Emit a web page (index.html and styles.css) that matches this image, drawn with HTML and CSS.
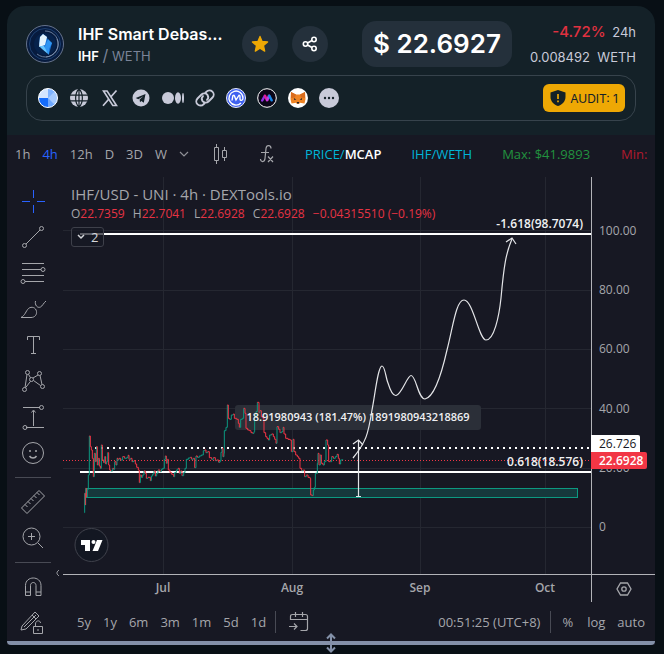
FILE: index.html
```html
<!DOCTYPE html>
<html lang="en">
<head>
<meta charset="utf-8">
<title>IHF / WETH</title>
<link rel="stylesheet" href="styles.css">
</head>
<body>
<main class="panel">
  <header class="head">
    <div class="summary">
      <svg class="avatar" viewBox="0 0 38 38" aria-hidden="true">
        <circle cx="19" cy="19" r="18.5" fill="#071b3e" stroke="#66738c"/>
        <circle cx="19" cy="19" r="15.5" fill="none" stroke="#1c3f70"/>
        <path d="M19 6a13 13 0 1 1-8 23M31 14a13 13 0 0 1-11 18" fill="none" stroke="#8295b4" stroke-width=".8"/>
        <circle cx="19" cy="19" r="11" fill="#06224c"/>
        <path d="M17 9l4 3 1 4 4 2-3 11-3-3-7-7 1-7z" fill="#1673d8"/>
        <path d="M17 9l4 3-2 8-6 2 1-10z" fill="#e4f4fd"/>
        <path d="M20 19l2-5 4 4-3 6 0 6-5-6z" fill="#2f95f2"/>
        <path d="M13 21l5 0 4 8-6-5z" fill="#64c5ff"/>
      </svg>
      <div class="names">
        <h1>IHF Smart Debas…</h1>
        <p><b>IHF</b> <i>/</i> WETH</p>
      </div>
      <div class="actions">
        <button class="round" aria-label="Favourite"><svg width="18" height="18" viewBox="0 0 18 18"><path d="M9 1.400l2.100 5 5.500.5-4.100 3.700 1.200 5.500L9 13.200l-4.700 2.900 1.200-5.500L1.400 6.900l5.500-.5z" fill="#eea804" stroke="#eea804" stroke-width="1.300" stroke-linejoin="round"/></svg></button>
        <button class="round" aria-label="Share"><svg width="16" height="16" viewBox="0 0 16 16" fill="none" stroke="#fff" stroke-width="1.600"><circle cx="3.500" cy="8" r="2.200"/><circle cx="12" cy="3.500" r="2.200"/><circle cx="12" cy="12.500" r="2.200"/><path d="M5.500 7L10 4.500M5.500 9l4.500 2.500"/></svg></button>
      </div>
      <div class="price">$ 22.6927</div>
      <div class="change">
        <p><strong>-4.72%</strong> 24h</p>
        <p>0.008492 &nbsp;WETH</p>
      </div>
    </div>
    <div class="links">
      <nav class="socials">
        <a href="#" aria-label="Explorer"><svg viewBox="0 0 20 20"><circle cx="10" cy="10" r="9.500" fill="#6da8ff"/><path d="M10 10V.5a9.500 9.500 0 0 0-9.500 9.500z" fill="#d3e5ff"/><path d="M10 10V.5A9.500 9.500 0 0 1 16.700 3.300z" fill="#7fb3ff"/><path d="M10 10L16.700 3.300A9.500 9.500 0 0 1 16.700 16.700z" fill="#a5caff"/><path d="M10 10H.5A9.500 9.500 0 0 0 10 19.500z" fill="#146cfb"/><circle cx="10" cy="10" r="9.500" fill="none" stroke="#fff"/></svg></a>
        <a href="#" aria-label="Website"><svg viewBox="0 0 20 20"><circle cx="10" cy="10" r="9" fill="#c8cad9"/><path d="M1 7.200h18M1 12.800h18M10 1v18M10 1C5.500 5 5.500 15 10 19M10 1c4.500 4 4.500 14 0 18" fill="none" stroke="#142128" stroke-width="1.200"/></svg></a>
        <a href="#" aria-label="X"><svg viewBox="0 0 20 20" fill="none" stroke="#c8cad9"><path d="M3.500 3h3.600l9.400 14.500h-3.700z" stroke-width="1.600"/><path d="M16.500 2.500L11 8.700M8.700 11.300l-5.700 6.400" stroke-width="1.700"/></svg></a>
        <a href="#" aria-label="Telegram"><svg viewBox="0 0 20 20"><circle cx="10" cy="10" r="8.500" fill="#c8cad9"/><path d="M4.700 10.100l9.800-4-1.700 8.700-2.500-1.900-1.300 1.300-.4-2.600 3.700-3.400-5 3z" fill="#142128"/></svg></a>
        <a href="#" aria-label="Medium"><svg class="wide" viewBox="0 0 22 20" fill="#c8cad9"><circle cx="6" cy="10" r="6"/><ellipse cx="16" cy="10" rx="3" ry="5.700"/><ellipse cx="21" cy="10" rx="1" ry="5"/></svg></a>
        <a href="#" aria-label="Contract"><svg viewBox="0 0 20 20" fill="none" stroke="#c8cad9" stroke-width="1.900" stroke-linecap="round"><path d="M9.500 15.500l-1 .8a4 4 0 0 1-6-5.800l4-4a4 4 0 0 1 6 .4 4 4 0 0 1-.5 5"/><path d="M10.500 4.500l1-.8a4 4 0 0 1 6 5.800l-4 4a4 4 0 0 1-6-.4 4 4 0 0 1 .5-5"/></svg></a>
        <a href="#" aria-label="CoinMarketCap"><svg viewBox="0 0 20 20"><circle cx="10" cy="10" r="9.500" fill="#3f61f0" stroke="#e8ebfb"/><path d="M15 15a7 7 0 1 1 2-5c0 3-3 3-3 1V8.500c0-1.500-1-1.500-1.500-.5L10 12 8.500 8C8 7 7 7.200 6.800 8L6 12.500" fill="none" stroke="#fff" stroke-width="1.400"/></svg></a>
        <a href="#" aria-label="Market"><svg viewBox="0 0 20 20"><circle cx="10" cy="10" r="9.300" fill="#0a0618" stroke="#fff"/><g fill="none" stroke-width="2.500" stroke-linecap="round"><path d="M5.200 12.500l2.500-4.500" stroke="#8d30e2"/><path d="M8 7.700l2 4.500" stroke="#e21d9b"/><path d="M10.300 12l1.700-4.300" stroke="#c63ae6"/><path d="M12.300 7.800l2.400 4.500" stroke="#1687e8"/></g></svg></a>
        <a href="#" aria-label="MetaMask"><svg viewBox="0 0 20 20"><circle cx="10" cy="10" r="10" fill="#fff"/><path d="M3 4l5 2.500h4L17 4l.5 7-1 4.500-4.500-.8-1 1.300H9l-1-1.300-4.500.8-1-4.500z" fill="#ef8424"/><path d="M3 4l5 2.500-1 3-4 .5zM17 4l-5 2.500 1 3 4 .5z" fill="#d96b1c"/><path d="M5.800 10l2.500 1.500-2 .5zM14.200 10l-2.500 1.500 2 .5zM8.800 14h2.400l-.3 1.500H9.100z" fill="#23242d"/></svg></a>
        <a href="#" aria-label="More"><svg viewBox="0 0 20 20"><circle cx="10" cy="10" r="10" fill="#c8cad9"/><g fill="#142128"><circle cx="6" cy="10" r="1.200"/><circle cx="10" cy="10" r="1.200"/><circle cx="14" cy="10" r="1.200"/></g></svg></a>
      </nav>
      <button class="audit"><svg width="16" height="16" viewBox="0 0 16 16"><path d="M8 0l7.500 2.500V7c0 4.500-3.500 7.700-7.500 9C4 14.700.5 11.500.5 7V2.500z" fill="#142128"/><path d="M8 4v5M8 10.500v1.800" stroke="#eea804" stroke-width="1.700"/></svg>AUDIT: 1</button>
    </div>
  </header>

  <section class="chart">
    <div class="topbar">
      <div class="intervals">
        <button>1h</button><button class="on">4h</button><button>12h</button><button>D</button><button>3D</button><button>W</button>
        <button aria-label="More intervals"><svg width="10" height="6" viewBox="0 0 10 6" fill="none" stroke="#8f9097" stroke-width="1.200"><path d="M1 1l4 4 4-4"/></svg></button>
      </div>
      <button class="tool-button" aria-label="Candles"><svg width="16" height="22" viewBox="0 0 16 22" fill="none" stroke="#a5a6ab"><path d="M1.500 4.500h4v13h-4zM3.500 1v3M3.500 18v3M9.500 7.500h4v7h-4zM11.500 4v3M11.500 15v3"/></svg></button>
      <button class="tool-button" aria-label="Indicators"><svg width="16" height="20" viewBox="0 0 16 20" fill="none" stroke="#a5a6ab" stroke-width="1.200"><path d="M12 4.500C12 1 7.500.5 7 4.500l-1 10c-.3 4-4.500 4-4.500.5M2 8.500h8M9 12.500l5 5.500M14 12.500L9 18"/></svg></button>
      <button class="cyan">PRICE/<b>MCAP</b></button>
      <button class="cyan">IHF/WETH</button>
      <span class="max">Max: $41.9893</span>
      <span class="min">Min:</span>
    </div>
    <div class="body">
      <div class="tools">
        <button aria-label="Crosshair"><svg viewBox="0 0 28 28"><path d="M14.500 3v8M14.500 18v8M3 14.500h8M18 14.500h8"/></svg></button>
        <button aria-label="Trend line"><svg viewBox="0 0 28 28"><circle cx="5.500" cy="22.500" r="2"/><circle cx="22.500" cy="5.500" r="2"/><path d="M7 21L21 7"/></svg></button>
        <button aria-label="Fibonacci"><svg viewBox="0 0 28 28"><path d="M3 4.500h22M3 10.500h19M3 16.500h22M6 22.500h19"/><circle cx="24" cy="10.500" r="2"/><circle cx="4" cy="22.500" r="2"/></svg></button>
        <button aria-label="Brush"><svg viewBox="0 0 28 28"><path d="M2 22.500h10c4 0 6-3 5.500-6-.5-4-5-5.500-8-3-3 3-3 6.500-7.500 9M16.500 6c-1 4 2 7.500 5 6 2-1 3-4 5.500-6"/></svg></button>
        <button aria-label="Text"><svg viewBox="0 0 28 28"><path d="M8.500 9V5.500h12V9M14.500 5.500v17M12 22.500h5"/></svg></button>
        <button aria-label="Pattern"><svg viewBox="0 0 28 28"><circle cx="8.500" cy="5.500" r="2"/><circle cx="20.500" cy="6.500" r="2"/><circle cx="12.500" cy="12.500" r="2"/><circle cx="5.500" cy="22.500" r="2"/><circle cx="23.500" cy="19.500" r="2"/><path d="M8 7.500l-2 13M9.500 7.300l2 3.500M14 11l5-3M21 8.500l2 9M14.500 13.500l7 5M11.500 14.300l-5 6.500"/></svg></button>
        <button aria-label="Measure"><svg viewBox="0 0 28 28"><path d="M4 4.500h17M7 24.500h18M14.500 23V8M12.500 9.500l2-2.500 2 2.500"/><circle cx="22.500" cy="4.500" r="2"/><circle cx="6" cy="24.500" r="2"/></svg></button>
        <button aria-label="Icons"><svg viewBox="0 0 28 28"><circle cx="14" cy="14" r="10.500"/><path d="M10.500 17c1.500 2.500 5.500 2.500 7 0M10 12h2M16 12h2" stroke-width="1.500"/></svg></button>
        <hr>
        <button aria-label="Ruler"><svg viewBox="0 0 28 28"><path d="M2.500 20L20 2.500l5.500 5.500L8 25.500zM6 16.500l2.500 2.500M9 13.500l2.500 2.500M12 10.500l2.500 2.500M15 7.500l2.500 2.500M18 4.500l2.500 2.500"/></svg></button>
        <button aria-label="Zoom in"><svg viewBox="0 0 28 28"><circle cx="12.500" cy="12.500" r="8.500"/><path d="M19 19l5 5M9 12.500h7M12.500 9v7"/></svg></button>
        <hr>
        <button aria-label="Magnet"><svg viewBox="0 0 28 28"><path d="M6.500 22.500v-10c0-10 15.500-10 15.500 0v10h-5v-10c0-4-5.500-4-5.500 0v10zM6.500 19h5M17 19h5"/></svg></button>
        <button aria-label="Lock drawings"><svg viewBox="0 0 28 28"><path d="M3 17L16 3l4 4L7 20l-5 1zM13 6l4 4M5 18L17 6M14.500 17.500h9v7h-9zM16.500 17v-2c0-4 5-4 5-1M19 20v2"/></svg></button>
      </div>
      <div class="stage">
        <div class="plot">
          <svg class="canvas" viewBox="63 177 592 425" role="img" aria-label="Price chart">
            <path class="grid" d="M63 230.500h528M63 290.500h528M63 349.500h528M63 408.500h528M63 468.500h528M63 527.500h528M163.500 177v397M292.500 177v397M420.500 177v397M545.500 177v397"/>
            <rect x="235" y="405" width="246" height="25" rx="3" fill="#2b2f38"/>
            <rect x="86.500" y="488.500" width="491" height="9" fill="#16383c" stroke="#0c9981"/>
            <path d="M80 234h511M80 472h511" stroke="#fff" stroke-width="2"/>
            <path d="M95 448h496" stroke="#fff" stroke-width="2" stroke-dasharray="2 4"/>
            <path d="M63 460.500h528" stroke="#f23645" stroke-dasharray="1 2"/>
            <g transform="translate(60 390) scale(.33333)" fill="none" stroke-width="3">
              <path id="up" stroke="#0c9981"/>
              <path id="down" stroke="#f23645"/>
            </g>
            <g fill="none" stroke="#e4e5e8" stroke-width="1.200">
              <path d="M353 458C366 442 368 435 372 410C375 395 378 366 382 366C385 366 386 379 388 383Q392 396 396 395.500C402 394 407 376 411 375.500C416 375 418 399 425 399C435 397 442 372 447 350C453 327 456 300 464 300C473 300 479 340 486 340C494 340 499 317 501 298C504 265 506 253 512 239"/>
              <path d="M506 242l6-4 4 6M358.500 440v57M353 444l5.500-4 4.500 5M356 496.500h5"/>
            </g>
            <g class="mark">
              <text x="583" y="228" text-anchor="end">-1.618(98.7074)</text>
              <text x="583" y="466" text-anchor="end">0.618(18.576)</text>
              <text class="measure" x="358" y="421" text-anchor="middle">18.91980943 (181.47%) 1891980943218869</text>
            </g>
            <g class="axis">
              <text x="599" y="235">100.00</text><text x="599" y="294">80.00</text><text x="599" y="353">60.00</text><text x="599" y="413">40.00</text><text x="599" y="472">20.00</text><text x="599" y="531">0</text>
            </g>
            <g class="axis dates" text-anchor="middle">
              <text x="163" y="592">Jul</text><text x="292" y="592">Aug</text><text x="420" y="592">Sep</text><text x="545" y="592">Oct</text>
            </g>
            <path d="M591.500 177v425M63 574.500h592" stroke="#b2b3b8"/>
            <path d="M591 435h47a2 2 0 0 1 2 2v15h-49z" fill="#fff"/>
            <path d="M591 452h54a2 2 0 0 1 2 2v13a2 2 0 0 1-2 2h-54z" fill="#f23645"/>
            <text class="tag dark" x="599" y="448">26.726</text>
            <text class="tag" x="599" y="465">22.6928</text>
            <circle cx="91.500" cy="545" r="16.500" fill="#131722" stroke="#40424c"/>
            <path d="M81 540h9v11h-5v-6h-4zM97 540h5.500l-4.500 11h-5.500z" fill="#fff"/><circle cx="93.500" cy="542" r="2" fill="#fff"/>
            <path d="M620.500 583h7l3.500 6-3.500 6h-7l-3.500-6z" fill="none" stroke="#a5a6ab" stroke-width="1.300"/>
            <circle cx="624" cy="589" r="2.200" fill="none" stroke="#a5a6ab" stroke-width="1.300"/>
          </svg>
          <div class="legend">
            <h2>IHF/USD - UNI · 4h · DEXTools.io</h2>
            <p>O<em>22.7359</em> H<em>22.7041</em> L<em>22.6928</em> C<em>22.6928</em> <em>−0.04315510 (−0.19%)</em></p>
            <button><svg width="8" height="6" viewBox="0 0 8 6" fill="none" stroke="#d5d6da" stroke-width="1.500"><path d="M1 1l3 3 3-3"/></svg>2</button>
          </div>
          <svg class="fold" width="4" height="8" viewBox="0 0 4 8" fill="none" stroke="#8f9097"><path d="M3 1L1 3v2l2 2"/></svg>
        </div>
        <div class="ranges">
          <div class="spans"><button>5y</button><button>1y</button><button>6m</button><button>3m</button><button>1m</button><button>5d</button><button>1d</button></div>
          <span class="rule"></span>
          <button aria-label="Go to date"><svg width="20" height="20" viewBox="0 0 20 20" fill="none" stroke="#a5a6ab" stroke-width="1.200"><path d="M1.500 8V4.500q0-2 2-2h13q2 0 2 2v12q0 2-2 2h-5M1.500 7.500h17M6.500 0v5M13.500 0v5M0 14.500h8M5 11.500l3 3-3 3"/></svg></button>
          <div class="scale"><span>00:51:25 (UTC+8)</span><span class="rule"></span><button class="percent">%</button><button>log</button><button>auto</button></div>
        </div>
      </div>
    </div>
    <div class="resize"><svg width="12" height="20" viewBox="0 0 12 20" fill="none" stroke="#8390a8" stroke-width="2"><path d="M6 2v16M2 5.500L6 1.500l4 4M2 14.500l4 4 4-4"/></svg></div>
  </section>
</main>
<script src="chart.js"></script>
</body>
</html>
```
FILE: styles.css
```css
* { box-sizing: border-box; margin: 0; }
body {
  min-height: 100vh;
  padding: 6px 9px 9px 7px;
  background: #080f15;
  color: #fff;
  font-family: Inter, "Liberation Sans", sans-serif;
}
button { padding: 0; border: 0; background: none; color: inherit; font: inherit; }
svg { display: block; }

.head {
  display: flex;
  flex-direction: column;
  gap: 8px;
  padding: 15px 19px 14px;
  border-radius: 18px 18px 0 0;
  background: #142128;
}
.summary { display: flex; align-items: center; height: 46px; }
.avatar { width: 38px; height: 38px; margin-right: 14px; }
.names { width: 164px; white-space: nowrap; }
.names h1 { font-size: 16px; line-height: 22px; font-weight: 600; }
.names p { font-size: 13px; line-height: 20px; color: #7b8499; }
.names b { color: #fff; font-weight: 600; }
.names i { font-size: 16px; font-style: normal; }
.actions { display: flex; gap: 14px; }
.round {
  display: grid;
  place-items: center;
  width: 36px;
  height: 36px;
  border-radius: 50%;
  background: #24303b;
}
.price {
  margin-left: 34px;
  padding: 0 11px;
  border-radius: 14px;
  background: #24303b;
  font-size: 26px;
  line-height: 46px;
  font-weight: 600;
  white-space: nowrap;
}
.change {
  flex: 1;
  color: #c8cad9;
  font-size: 13px;
  line-height: 25px;
  text-align: right;
  white-space: nowrap;
}
.change strong { margin-right: 3px; color: #e03140; font-size: 15px; font-weight: 500; }
.links {
  display: flex;
  align-items: center;
  justify-content: space-between;
  height: 46px;
  padding: 0 10px 0 11px;
  border: 1px solid #37434c;
  border-radius: 16px;
}
.socials { display: flex; gap: 11px; }
.socials svg { width: 20px; height: 20px; }
.socials .wide { width: 22px; }
.audit {
  display: flex;
  align-items: center;
  gap: 4px;
  height: 28px;
  padding: 0 7px;
  border-radius: 6px;
  background: #eea804;
  color: #142128;
  font-size: 12px;
}

.chart {
  background: #171823;
  color: #a5a6ab;
  font-family: "Open Sans", "Noto Sans", sans-serif;
  font-size: 13px;
}
.topbar {
  display: flex;
  align-items: center;
  height: 42px;
  padding: 0 0 4px 8px;
  overflow: hidden;
  white-space: nowrap;
}
.intervals { display: flex; align-items: center; gap: 12px; margin-right: 24px; }
.on { color: #2962ff; }
.tool-button { margin-right: 30px; }
.cyan { margin-right: 30px; color: #00b5d8; }
.cyan b { color: #fff; font-weight: 600; }
.max { margin-right: 31px; color: #22923f; }
.min { color: #b01a2e; }

.body { display: flex; }
.tools { flex: none; width: 52px; padding: 6px 0 0; }
.tools button { display: grid; place-items: center; width: 52px; height: 36px; }
.tools svg {
  width: 28px;
  height: 28px;
  fill: none;
  stroke: #a5a6ab;
}
.tools button:first-child svg { stroke: #2962ff; }
.tools hr { width: 36px; margin: 6px 8px; border: 0; border-top: 1px solid #484a54; }
.stage { flex: 1; min-width: 0; padding-left: 4px; }
.plot { position: relative; }
.canvas { width: 100%; height: auto; }
.grid { stroke: #252731; }
.mark { fill: #eff0f2; font-size: 12px; font-weight: 600; }
.measure { font-size: 11px; }
.axis { fill: #a5a6ab; font-size: 12px; }
.dates { font-weight: 600; }
.tag { fill: #fff; font-size: 12px; font-weight: 600; }
.dark { fill: #171823; font-weight: 400; }
.legend { position: absolute; top: 6px; left: 8px; white-space: nowrap; }
.legend h2 { font-size: 15px; line-height: 22px; font-weight: 400; }
.legend p { font-size: 12px; line-height: 18px; }
.legend em { margin-right: 5px; color: #e63343; font-style: normal; }
.legend button {
  display: flex;
  align-items: center;
  gap: 6px;
  height: 20px;
  margin-top: 4px;
  padding: 0 5px;
  border: 1px solid #3e404a;
  border-radius: 3px;
  background: rgb(23 24 35 / 70%);
  color: #d5d6da;
}
.fold { position: absolute; bottom: 25px; left: -7px; }
.ranges { display: flex; align-items: center; height: 39px; padding: 0 10px 0 14px; white-space: nowrap; }
.spans { display: flex; gap: 12px; margin-right: 9px; }
.rule { width: 1px; height: 22px; margin-right: 13px; background: #484a54; }
.scale { display: flex; align-items: center; margin-left: auto; }
.scale span:first-child { margin-right: 10px; }
.scale .rule { margin-right: 11px; }
.percent { margin-right: 14px; }
.percent + button { margin-right: 12px; }
.resize { position: relative; height: 4px; border-radius: 0 0 4px 4px; background: #8390a8; }
.resize svg { position: absolute; top: -8px; left: 50%; transform: translateX(-50%); }
```
FILE: chart.js
```js
// Time and level of each step of the price line.
const steps = [
  73,368, 74,310, 76,345, 77,295, 79,322, 82,298, 85,255, 88,138, 91,170, 94,180, 97,205, 100,260,
  103,190, 106,215, 109,170, 112,225, 115,205, 118,228, 121,235, 124,165, 127,210, 131,218, 134,200,
  137,222, 140,215, 143,188, 146,225, 149,240, 152,243, 158,235, 161,238, 164,215, 168,225, 171,205,
  174,210, 177,205, 182,210, 188,200, 194,205, 200,203, 204,196, 207,208, 212,205, 216,215, 222,212,
  226,222, 230,232, 235,240, 238,278, 241,255, 244,262, 248,255, 252,243, 256,250, 259,265, 264,262,
  271,272, 274,258, 278,252, 282,243, 286,258, 290,250, 294,240, 300,245, 304,238, 308,235, 313,208,
  316,198, 319,220, 322,208, 325,240, 330,248, 335,253, 341,260, 344,248, 349,240, 354,235, 358,250,
  362,243, 366,257, 371,248, 375,235, 379,208, 385,204, 391,202, 395,208, 400,205, 404,233, 408,198,
  412,202, 418,198, 424,195, 430,182, 434,180, 438,188, 443,185, 448,203, 455,208, 460,203, 466,212,
  470,210, 476,217, 480,213, 483,187, 486,175, 489,200, 492,190, 493,122, 498,112, 502,45, 505,85,
  509,88, 514,75, 520,72, 523,85, 530,88, 535,100, 538,112, 542,88, 547,85, 551,55, 555,70, 558,115,
  563,120, 568,122, 573,128, 578,130, 582,125, 584,80, 588,65, 592,37, 597,68, 600,62, 604,80,
  609,85, 612,128, 617,140, 621,145, 625,150, 629,135, 635,132, 640,140, 644,148, 648,160, 651,110,
  656,118, 660,128, 665,125, 669,112, 672,132, 677,145, 684,148, 690,150, 694,185, 699,148, 702,185,
  707,195, 712,200, 716,205, 720,235, 725,242, 730,240, 734,260, 739,255, 744,262, 750,265, 752,315,
  757,317, 760,300, 763,292, 766,250, 772,220, 774,190, 777,225, 781,195, 784,220, 789,225, 793,215,
  798,150, 803,165, 806,215, 811,215, 815,200, 820,205, 826,200, 831,193, 835,205, 838,222, 842,210,
  848,208
];
const lines = { up: "", down: "" };
for (let i = 2; i < steps.length; i += 2) {
  const [x0, y0, x, y] = steps.slice(i - 2, i + 2);
  lines[y < y0 ? "up" : "down"] += `M${x0} ${y0}H${x}V${y}`;
}
for (const id in lines) document.getElementById(id).setAttribute("d", lines[id]);
```
